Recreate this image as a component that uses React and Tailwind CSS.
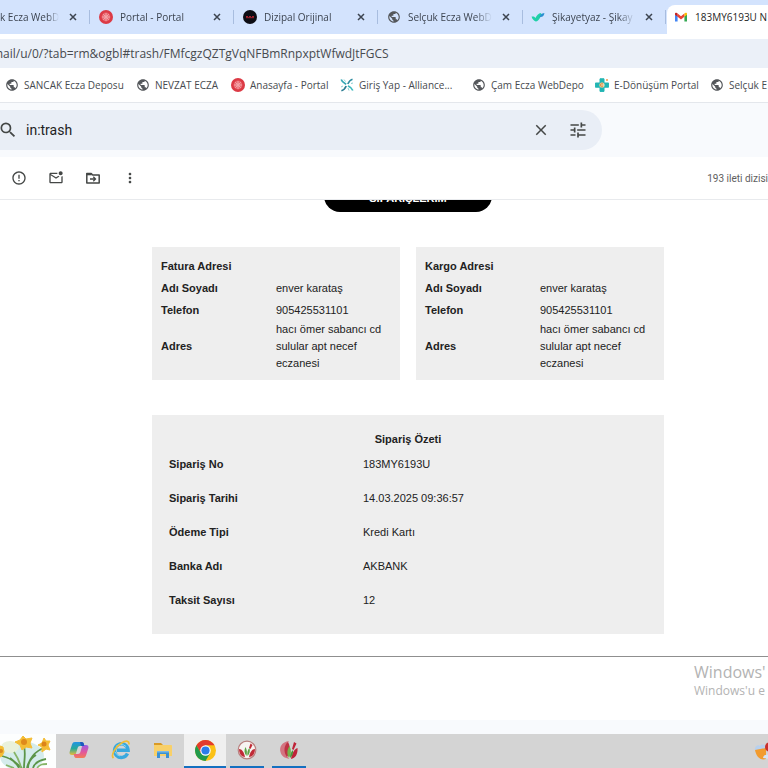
import React from 'react';
import {
  MdPublic,
  MdSearch,
  MdClose,
  MdTune,
  MdErrorOutline,
  MdOutlineMarkEmailUnread,
  MdMoreVert,
} from 'react-icons/md';

const GlobeIcon = () => <MdPublic className="h-[14px] w-[14px] shrink-0 text-[#54575b]" />;

const PortalIcon = () => (
  <svg viewBox="0 0 14 14" className="h-[14px] w-[14px] shrink-0">
    <circle cx="7" cy="7" r="7" fill="#dc3a45" />
    <circle cx="7" cy="7" r="4.4" fill="#ea6870" />
    <g stroke="#f6bfc2" strokeWidth=".7">
      <path d="M7 3v8M3 7h8M4.2 4.2l5.6 5.6M9.8 4.2L4.2 9.8" />
    </g>
    <circle cx="7" cy="7" r="1.4" fill="#f3a3a7" />
  </svg>
);

const DizipalIcon = () => (
  <svg viewBox="0 0 14 14" className="h-[14px] w-[14px] shrink-0">
    <circle cx="7" cy="7" r="7" fill="#0d0d14" />
    <path d="M3 6.5h2M6 6.5h2M9 6.5h2M3 7.7h8" stroke="#a5202d" strokeWidth="1" />
  </svg>
);

const CheckBirdIcon = () => (
  <svg viewBox="0 0 14 14" className="h-[14px] w-[14px] shrink-0">
    <path d="M.6 6.6c2.4-.5 3.2.3 3.900 1.500C5.600 5.500 7.300 3.200 10.200 3c-.3 4-2 7.700-5.400 8.600C2.800 10.800 1 9 .6 6.600z" fill="#1fd0a8" />
    <path d="M8.500 7.200c.4-2.200 2-4.100 4.900-4.200-.2 2.200-1.500 4.300-4.900 4.200z" fill="#2a8fd0" />
  </svg>
);

const GmailIcon = () => (
  <svg viewBox="0 0 14 14" className="h-[14px] w-[14px] shrink-0">
    <path d="M1 4v7.500h2.600V6z" fill="#4285f4" />
    <path d="M13 4v7.500h-2.600V6z" fill="#34a853" />
    <path d="M3.600 3.600v3.200L7 9.400l3.400-2.600V3.600L7 6.200z" fill="#ea4335" />
    <path d="M1 3.800v1l2.600 2V3.600l-.7-.5C2 2.500 1 2.900 1 3.800z" fill="#c5221f" />
    <path d="M13 3.800v1l-2.600 2V3.600l.7-.5c.9-.6 1.900-.2 1.900.7z" fill="#fbbc04" />
  </svg>
);

const AllianceIcon = () => (
  <svg viewBox="0 0 14 14" className="h-[14px] w-[14px] shrink-0" fill="none" strokeWidth="1.700">
    <path d="M1.200 1.500c1 3 3 3.600 5 4.700" stroke="#35a7b5" />
    <path d="M12.500 1.200c-3 .8-3.700 2.600-4.700 4.800" stroke="#2d8ca0" />
    <path d="M12.800 12.600c-1-3-2.800-3.700-4.900-4.700" stroke="#3bb8bd" />
    <path d="M1.400 12.800c3-.8 3.900-2.700 4.800-4.800" stroke="#2b7c92" />
    <path d="M4 1.500l1.500 2M9 12.500L8 10M1 9l2-1M11 5.500l2-.5" stroke="#8bd0d3" strokeWidth="1" />
  </svg>
);

const EDonusumIcon = () => (
  <svg viewBox="0 0 14 14" className="h-[14px] w-[14px] shrink-0">
    <path d="M5 .8h4V5h4.600v4.200H9v4.200H5V9.200H.4V5H5z" fill="#22b5b3" stroke="#22b5b3" strokeLinejoin="round" />
    <circle cx="7" cy="7" r="2.600" fill="#f2e6c6" />
    <path d="M8.300 5.600a1.900 1.900 0 1 0 0 2.800M5.300 7h2.900" stroke="#df8a3c" fill="none" />
    <circle cx="12" cy="2" r="1" fill="#ef9a4b" />
  </svg>
);

const MoveToIcon = () => (
  <svg viewBox="0 0 16 16" className="h-4 w-4" fill="none" stroke="#444746" strokeWidth="1.500">
    <path d="M1.800 3.500h4.400l1.500 1.500h6.500v8H1.800z" strokeLinejoin="round" />
    <path d="M1.500 4.300h5.200" strokeWidth="2" />
    <path d="M5 9h5.500M8.300 6.800L10.500 9l-2.200 2.200" strokeWidth="1.300" />
  </svg>
);

const DaffodilArt = () => (
  <svg viewBox="0 0 56 34" className="h-full w-14">
    <rect width="56" height="34" fill="#fdfefe" />
    <ellipse cx="22" cy="22" rx="22" ry="15" fill="#d5ecec" />
    <ellipse cx="10" cy="13" rx="9" ry="6" fill="#e9f1dc" />
    <g stroke="#5c9549" strokeWidth="1.800" fill="none">
      <path d="M24 12c2 8 0 14 0 22M2 22c8 2 14 6 17 12M44 14c-9 3-15 11-17 20M10 24l12 10M33 34c2-6 7-8 13-9M28 34c0-7 5-11 8-13" />
      <path d="M14 18c4 6 6 10 7 16M37 34c3-4 6-4 10-4M6 31l8 3" stroke="#86b468" />
    </g>
    <g fill="#f4bd35" stroke="#f4bd35" strokeLinejoin="round">
      <path d="M23 2l3 3 6-1-2 5 2 5-6-1-4 3-2-5-5-3 5-2z" />
      <path d="M44 4l2 3 4 0-2 4 2 5-4-1-4 3 0-5-4-2 4-2z" />
      <path d="M0 12l3 1 1 5-2 4-2 1z" />
    </g>
    <circle cx="24" cy="8" r="3" fill="#df8a1b" />
    <circle cx="44" cy="10" r="2.500" fill="#dc8419" />
    <circle cx="1" cy="17" r="2" fill="#d98a22" />
  </svg>
);

const CopilotIcon = () => (
  <svg viewBox="0 0 20 20" className="h-5 w-5">
    <defs>
      <linearGradient id="copilotLeft" x1="0" y1="0" x2="0" y2="1">
        <stop offset="0" stopColor="#2293e5" />
        <stop offset=".5" stopColor="#27a99a" />
        <stop offset="1" stopColor="#e9bb38" />
      </linearGradient>
      <linearGradient id="copilotRight" x1="0" y1="0" x2="0" y2="1">
        <stop offset="0" stopColor="#9b5ce5" />
        <stop offset=".55" stopColor="#e2579b" />
        <stop offset="1" stopColor="#f47c54" />
      </linearGradient>
    </defs>
    <path d="M6 2h6.500c1.300 0 2 .7 2.300 1.800L15.300 6H11c-1.400 0-2 .9-2.400 2L7 13.500C6.600 14.700 6 15 5 15H3c-1.900 0-2.800-1.200-2.400-3L3 4.500C3.500 2.800 4.400 2 6 2z" fill="url(#copilotLeft)" />
    <path d="M14 18H7.500c-1.300 0-2-.7-2.300-1.800L4.700 14H9c1.400 0 2-.9 2.400-2L13 6.500c.4-1.200 1-1.500 2-1.500h2c1.900 0 2.800 1.200 2.400 3L17 15.500c-.5 1.700-1.400 2.500-3 2.500z" fill="url(#copilotRight)" />
    <path d="M12.500 2c1.300 0 2 .7 2.300 1.800l.5 2.200H12l-1-4z" fill="#2058bd" />
  </svg>
);

const ExplorerIcon = () => (
  <svg viewBox="0 0 20 20" className="h-5 w-5" fill="none">
    <path d="M16.500 13.500a6.800 6.800 0 1 1 .6-3.300H6" stroke="#38a9df" strokeWidth="3.400" />
    <path d="M5 6.500a7 7 0 0 1 10 0M4 12a7 7 0 0 0 5 4" stroke="#8bd7f5" strokeWidth="1" />
    <path d="M2.500 18C-.5 15.500 4 7 10.500 3c5-3 8-2 7.500 1.500" stroke="#f0be37" strokeWidth="1.700" />
  </svg>
);

const FolderIcon = () => (
  <svg viewBox="0 0 20 20" className="h-5 w-5">
    <path d="M1 3h7l2 2H1z" fill="#d99a26" />
    <path d="M1 5h17c.6 0 1 .4 1 1v10H1z" fill="#f8d069" />
    <path d="M4 11h12v7h-3v-4H7v4H4z" fill="#3b91d3" />
    <path d="M4 11h12v1.500H4z" fill="#79b8e6" />
  </svg>
);

const ChromeIcon = () => (
  <svg viewBox="0 0 20 20" className="h-[21px] w-[21px]">
    <circle cx="10" cy="10" r="10" fill="#fbc116" />
    <path d="M1.340 5A10 10 0 0 1 18.660 5H10L5.670 12.500z" fill="#e33b2e" />
    <path d="M1.340 5A10 10 0 0 0 10 20l4.330-7.500L10 10 5.670 12.500z" fill="#229a4b" />
    <circle cx="10" cy="10" r="5" fill="#fff" />
    <circle cx="10" cy="10" r="3.900" fill="#2b7ce9" />
  </svg>
);

const PharmacyIcon = () => (
  <svg viewBox="0 0 20 20" className="h-5 w-5">
    <circle cx="10" cy="10" r="8.800" fill="#f7f3f1" stroke="#b9807f" strokeWidth="1.200" />
    <path d="M2 9c3 0 5 3 6 8-4 0-6-4-6-8zM18 9c-3 0-5 3-6 8 4 0 6-4 6-8z" fill="#c02a36" />
    <path d="M13.500 3.500l2 1.500-2 4-1.500-1z" fill="#c02a36" />
    <path d="M9.500 16C7 13 7 10 8.500 7c1.500 3 1.800 5 1 9zM10.500 16c-.5-3.500 0-6 2-8 .8 3 .2 6-2 8z" fill="#5ba345" />
  </svg>
);

const PharmacyAltIcon = () => (
  <svg viewBox="0 0 20 20" className="h-5 w-5">
    <path d="M10 1C3 2 0 7 1.500 12c1 4 4 6 9 7C5 14 5 7 10 1z" fill="#d37480" />
    <path d="M9 2C5 5 4 12 8 17c3-4 4-10 1-15z" fill="#be3344" />
    <path d="M15 2l2.500 1.500-3 6.500-1.500-1zM18.500 8c-3 1-5.500 5-6.500 11 4.500-1 7-5 6.500-11z" fill="#bf2338" />
    <path d="M10 18C7.500 14 8 10 10.500 6c2 4 2 8-.5 12z" fill="#75b34c" />
    <path d="M11 18c0-4 1-6 3-8 .5 3-.5 6-3 8z" fill="#4c933b" />
  </svg>
);

const WeatherIcon = () => (
  <svg viewBox="0 0 20 20" className="h-5 w-5 shrink-0">
    <path d="M1 9c-1-3 3-6 5-4 2-3 6-1 6 2v3z" fill="#b7d0ee" />
    <path d="M1 9l11-2v11c-6 2-10-3-11-9z" fill="#f29b2e" />
    <path d="M9 17c0-3 3-4 6-3v4z" fill="#d6e3f6" />
    <circle cx="16" cy="6" r="5" fill="#c9302c" />
  </svg>
);

const tabs = [
  { title: 'k Ecza WebD', width: 'w-[90px]', icon: null },
  { title: 'Portal - Portal', width: 'w-36', icon: <PortalIcon /> },
  { title: 'Dizipal Orijinal', width: 'w-36', icon: <DizipalIcon /> },
  { title: 'Selçuk Ecza WebD', width: 'w-36', icon: <GlobeIcon /> },
  { title: 'Şikayetyaz - Şikay', width: 'w-36', icon: <CheckBirdIcon /> },
];

const bookmarks = [
  { title: 'SANCAK Ecza Deposu', width: 'w-[131px]', icon: <GlobeIcon /> },
  { title: 'NEVZAT ECZA', width: 'w-[95px]', icon: <GlobeIcon /> },
  { title: 'Anasayfa - Portal', width: 'w-[109px]', icon: <PortalIcon /> },
  { title: 'Giriş Yap - Alliance...', width: 'w-[132px]', icon: <AllianceIcon /> },
  { title: 'Çam Ecza WebDepo', width: 'w-[123px]', icon: <GlobeIcon /> },
  { title: 'E-Dönüşüm Portal', width: 'w-[115px]', icon: <EDonusumIcon /> },
  { title: 'Selçuk E', width: 'w-[58px]', icon: <GlobeIcon /> },
];

const mailActions = [
  { label: 'Spam bildir', icon: <MdErrorOutline className="h-4 w-4" /> },
  { label: 'Okunmadı olarak işaretle', icon: <MdOutlineMarkEmailUnread className="h-4 w-4" /> },
  { label: 'Taşı', icon: <MoveToIcon /> },
  { label: 'Diğer', icon: <MdMoreVert className="h-4 w-4" /> },
];

const addressRows = [
  { label: 'Adı Soyadı', value: 'enver karataş' },
  { label: 'Telefon', value: '905425531101' },
  { label: 'Adres', value: 'hacı ömer sabancı cd sulular apt necef eczanesi' },
];

const orderRows = [
  { label: 'Sipariş No', value: '183MY6193U' },
  { label: 'Sipariş Tarihi', value: '14.03.2025 09:36:57' },
  { label: 'Ödeme Tipi', value: 'Kredi Kartı' },
  { label: 'Banka Adı', value: 'AKBANK' },
  { label: 'Taksit Sayısı', value: '12' },
];

const taskbarApps = [
  { name: 'Copilot', icon: <CopilotIcon />, style: '' },
  { name: 'Internet Explorer', icon: <ExplorerIcon />, style: '' },
  { name: 'Dosya Gezgini', icon: <FolderIcon />, style: '' },
  { name: 'Chrome', icon: <ChromeIcon />, style: 'bg-[#efefef]', line: 'w-full' },
  { name: 'Eczane', icon: <PharmacyIcon />, style: '', line: 'w-[34px]' },
  { name: 'Eczane 2', icon: <PharmacyAltIcon />, style: '', line: 'w-[34px]' },
];

const AddressCard = ({ title }) => (
  <div className="flex-1 bg-[#eeeeee] pt-2 pr-2 pb-2 pl-[9px]">
    <table className="w-full table-fixed text-left text-[11px] leading-[17px]">
      <thead>
        <tr className="h-[22px]">
          <th className="w-[115px] font-bold">{title}</th>
          <th />
        </tr>
      </thead>
      <tbody>
        {addressRows.map((row) => (
          <tr key={row.label} className="h-[22px]">
            <th className="font-bold">{row.label}</th>
            <td>{row.value}</td>
          </tr>
        ))}
      </tbody>
    </table>
  </div>
);

const App = () => {
  return (
    <div className="relative flex min-h-screen flex-col overflow-hidden bg-white font-['Liberation_Sans',sans-serif] text-[#222222]">
      {/* Browser tabs */}
      <div className="flex h-[34px] items-stretch bg-[#d3e3fd] font-['Open_Sans',sans-serif] text-[10px] text-[#3c4450]">
        {tabs.map((tab) => (
          <div key={tab.title} className={`flex shrink-0 items-center ${tab.width}`}>
            {tab.icon && <span className="pr-[7px] pl-[9px]">{tab.icon}</span>}
            <span className="flex-1 whitespace-nowrap [mask-image:linear-gradient(to_right,black_80%,transparent)]">
              {tab.title}
            </span>
            <button className="pr-3 pl-[10px]" aria-label="Sekmeyi kapat">
              <svg viewBox="0 0 8 8" className="h-2 w-2" stroke="#3c4450" strokeWidth="1.500">
                <path d="M1 1l6 6M7 1L1 7" />
              </svg>
            </button>
            <span className="h-[14px] w-px bg-[#a8bddf]" />
          </div>
        ))}
        <div className="mt-[5px] ml-px flex flex-1 items-center gap-[7px] rounded-tl-lg bg-white pb-[5px] pl-[7px] whitespace-nowrap text-[#1f1f1f]">
          <GmailIcon />
          183MY6193U N
        </div>
      </div>

      {/* Address bar */}
      <div className="mt-[5px] flex h-[29px] items-center bg-[#ebf0f8] font-['Open_Sans',sans-serif] text-xs text-[#474a4f]">
        <input
          type="text"
          aria-label="Adres çubuğu"
          className="-ml-2 w-full bg-transparent outline-none"
          defaultValue="mail/u/0/?tab=rm&ogbl#trash/FMfcgzQZTgVqNFBmRnpxptWfwdJtFGCS"
        />
      </div>

      {/* Bookmarks */}
      <nav className="flex h-[35px] items-center border-b border-[#e4e7ec] pl-[5px] font-['Open_Sans',sans-serif] text-[10px] text-[#474a4f]">
        {bookmarks.map((item) => (
          <a key={item.title} href="#" className={`flex shrink-0 items-center gap-[5px] whitespace-nowrap ${item.width}`}>
            {item.icon}
            {item.title}
          </a>
        ))}
      </nav>

      {/* Mail search */}
      <div className="bg-[#f8fafd] pt-[7px] pb-[7px]">
        <div className="mr-[166px] flex h-10 items-center rounded-r-full bg-[#e9eef6] pr-[14px] text-[#444746]">
          <MdSearch className="-ml-[2px] h-5 w-5 shrink-0" />
          <input
            type="text"
            aria-label="Postalarda arayın"
            defaultValue="in:trash"
            className="min-w-0 flex-1 bg-transparent pl-2 font-['Roboto',sans-serif] text-sm text-[#1f1f1f] outline-none"
          />
          <button aria-label="Aramayı temizle">
            <MdClose className="h-[18px] w-[18px]" />
          </button>
          <button className="ml-[18px]" aria-label="Arama seçenekleri">
            <MdTune className="h-5 w-5" />
          </button>
        </div>
      </div>

      {/* Mail toolbar */}
      <div className="flex h-[43px] items-center border-b border-[#e8eaed] text-[#444746]">
        {mailActions.map((action) => (
          <button key={action.label} aria-label={action.label} className="flex w-[37px] justify-center">
            {action.icon}
          </button>
        ))}
        <span className="ml-auto font-['Roboto',sans-serif] text-[10px] whitespace-nowrap text-[#5e5e5e]">193 ileti dizisi</span>
      </div>

      {/* Message body */}
      <main className="overflow-hidden border-b border-[#8f8f8f] pl-12">
        <div className="mx-auto max-w-lg">
          <button className="mx-auto -mt-5 block h-8 w-42 rounded-2xl bg-black pt-1 text-[11px] font-bold text-white">
            SİPARİŞLERİM
          </button>
          <div className="mt-[35px] flex gap-4">
            <AddressCard title="Fatura Adresi" />
            <AddressCard title="Kargo Adresi" />
          </div>
          <div className="mt-[35px] mb-[22px] bg-[#eeeeee] px-[17px] pt-4 pb-[17px]">
            <table className="w-full table-fixed text-left text-[11px] leading-4">
              <caption className="text-center font-bold">Sipariş Özeti</caption>
              <tbody>
                {orderRows.map((row) => (
                  <tr key={row.label} className="h-[34px]">
                    <th className="w-[194px] font-bold">{row.label}</th>
                    <td>{row.value}</td>
                  </tr>
                ))}
              </tbody>
            </table>
          </div>
        </div>
      </main>
      <div className="flex-1" />
      <div className="h-[14px] bg-[#f8fafd]" />

      {/* Windows activation watermark */}
      <div className="absolute right-0 bottom-[68px] w-[74px] font-['Open_Sans',sans-serif] whitespace-nowrap text-[#b3b3b3]">
        <div className="text-base leading-5">Windows'</div>
        <div className="text-xs leading-[18px]">Windows'u e</div>
      </div>

      {/* Taskbar */}
      <footer className="flex h-[34px] overflow-hidden bg-[#d4d4d4]">
        <DaffodilArt />
        <div className="ml-[2px] flex">
          {taskbarApps.map((app) => (
            <button key={app.name} aria-label={app.name} className={`flex w-[42px] flex-col items-center ${app.style}`}>
              <span className="flex flex-1 items-center">{app.icon}</span>
              <span className={`h-[2px] bg-[#1470c0] ${app.line || 'invisible'}`} />
            </button>
          ))}
        </div>
        <div className="-mr-[6px] ml-auto flex items-center">
          <WeatherIcon />
        </div>
      </footer>
    </div>
  );
};

export default App;
